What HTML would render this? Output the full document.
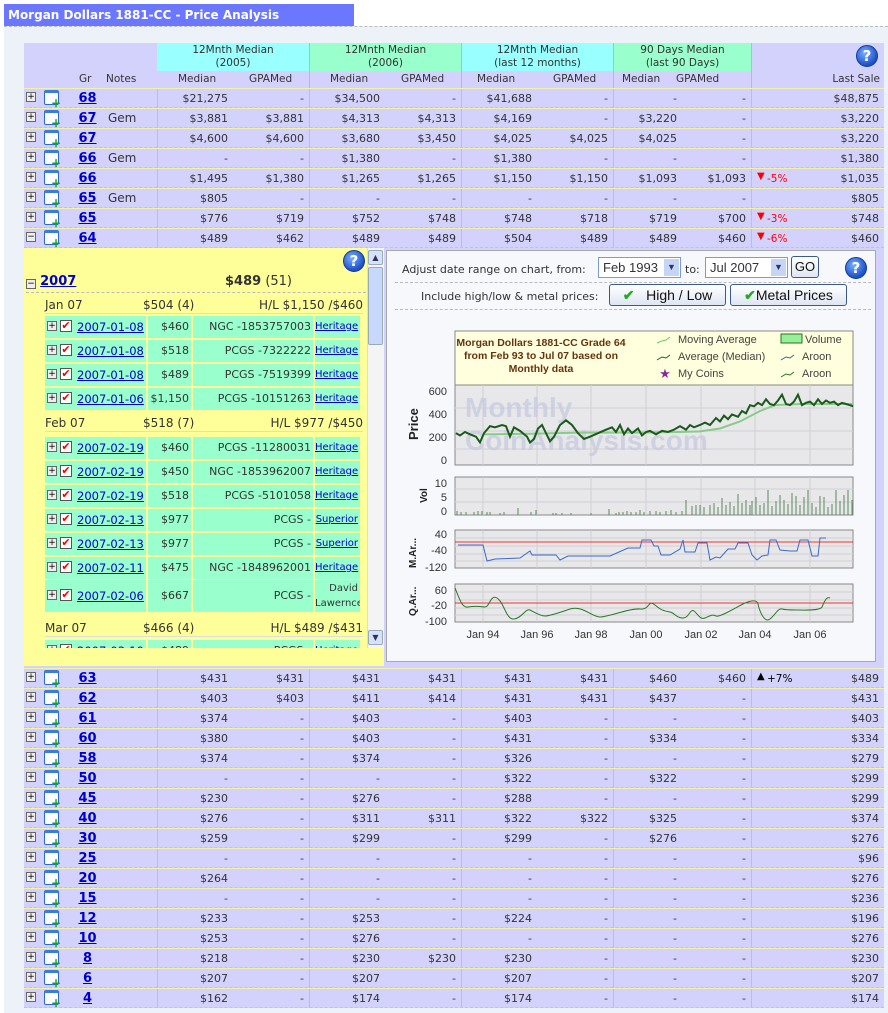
<!DOCTYPE html>
<html><head><meta charset="utf-8"><style>
*{margin:0;padding:0;box-sizing:border-box}
body{width:888px;height:1013px;background:#fff;font-family:"DejaVu Sans","Liberation Sans",sans-serif;font-size:11px;color:#333;position:relative;overflow:hidden}
.title{position:absolute;left:4px;top:4px;width:350px;height:22px;background:#6b77ff;color:#fff;font-weight:bold;font-size:12px;line-height:22px;padding-left:4px}
.bg{position:absolute;left:4px;top:26px;width:884px;height:987px;background:#edf2f9;border-top:1px dashed #bbb}
.hd{position:absolute;left:24px;top:43px;width:860px;height:45px;background:#d2d2fc}
.hc{position:absolute;top:0;height:28px;text-align:center;line-height:13px;padding-top:1px;font-size:10.5px}
.hs{position:absolute;top:30px;font-size:10.5px}
.r{position:absolute;left:24px;width:860px;height:20px;display:grid;grid-template-columns:16px 30px 35px 52px 76px 76px 76px 76px 76px 76px 69px 69px 133px;background:#d2d2fc;line-height:19px;border-top:1px solid #f4f0b0;border-bottom:1px dashed #c4c4c4;font-size:11px}
.r>span{text-align:right;padding-right:5px;white-space:nowrap}
.r>span:nth-child(5),.r>span:nth-child(7),.r>span:nth-child(9),.r>span:nth-child(11),.r>span:nth-child(13){border-left:1px solid #c0c0c0}
.r>span:nth-child(13){position:relative}
.pl{display:block;width:10px;height:10px;border:1px solid #666;background:#eee;margin:3px 0 0 2px;font-size:9px;line-height:8px;text-align:center;font-style:normal;color:#000}
.ic{display:block;width:15px;height:15px;margin:1px 0 0 4px;border:1px solid #2a6ad8;border-top:3px solid #3a7ae8;border-radius:2px;background:#fff;position:relative}
.ic:after{content:"+";position:absolute;right:-3px;bottom:-5px;color:#1a1;font-weight:bold;font-size:12px;line-height:12px}
.g{text-align:center!important;padding:0!important;color:#00c;font-weight:bold;text-decoration:underline;font-size:13px}
.n{text-align:left!important;font-size:12px;padding-left:3px}
.dn{position:absolute;left:5px;top:0;color:#f00;font-size:10px;line-height:16px;font-weight:normal}
.pc{position:absolute;left:15px;top:1px;color:#f00;font-size:10.5px;font-weight:normal}
.help{position:absolute;width:22px;height:22px;border-radius:50%;background:radial-gradient(circle at 40% 35%,#7ab0ff,#1d4fc8 70%);border:1px solid #113a9a;color:#fff;font-weight:bold;font-size:15px;line-height:20px;text-align:center}
.yel{position:absolute;left:24px;top:248px;width:360px;height:418px;background:#ffff99;overflow:hidden}
.mh{position:absolute;left:21px;width:318px;height:18px;border-bottom:1px solid #ddd;font-size:12px;line-height:18px}
.sr{position:absolute;left:21px;width:317px;height:22px;display:grid;grid-template-columns:14px 16px 73px 45px 122px 47px;background:#99ffcc;font-size:11px;line-height:22px}
.sr>*{border-right:2px solid #ffff99;white-space:nowrap;overflow:hidden}
.sr .d{color:#00c;text-decoration:underline;padding-left:2px;font-size:11.5px}
.sr .p{text-align:right;padding-right:2px}
.sr .s{text-align:right;padding-right:2px}
.sr .h{color:#00c;text-decoration:underline;font-size:10px;text-align:right;padding-right:2px}
.sp{display:block;width:10px;height:10px;border:1px solid #666;background:#eee;margin:5px 0 0 2px;font-size:9px;line-height:8px;text-align:center;color:#000}
.ck{display:block;width:12px;height:12px;border:1px solid #555;background:#fff;margin:4px 0 0 1px;color:#e00;font-size:11px;line-height:10px;text-align:center;font-weight:bold}
.cp{position:absolute;left:386px;top:250px;width:490px;height:412px;background:#f7f8fb;border:1px solid #aaa}
.sel{position:absolute;height:21px;border:1px solid #7a9cd3;background:#fff;line-height:19px;padding-left:4px;font-family:"Liberation Sans",sans-serif;font-size:13px}
.sel i{position:absolute;right:1px;top:1px;width:15px;height:17px;background:#c5d5f5;font-style:normal;font-size:9px;text-align:center;line-height:17px;color:#336}
.btn{position:absolute;height:22px;border:1px solid #3a5a8a;border-radius:3px;background:linear-gradient(#fff,#dfe6f2);font-family:"Liberation Sans",sans-serif;font-size:14px;line-height:20px;text-align:center;color:#111}
.btn b{color:#2a2;font-size:14px}
</style></head><body>
<div class="title">Morgan Dollars 1881-CC - Price Analysis</div>
<div class="bg"></div>
<div class="hd">
<div class="hc" style="left:133px;width:152px;background:#99ffff">12Mnth Median<br>(2005)</div>
<div class="hc" style="left:285px;width:152px;background:#99ffcc;border-left:1px solid #bbb">12Mnth Median<br>(2006)</div>
<div class="hc" style="left:437px;width:152px;background:#99ffff;border-left:1px solid #bbb">12Mnth Median<br>(last 12 months)</div>
<div class="hc" style="left:589px;width:138px;background:#99ffcc;border-left:1px solid #bbb">90 Days Median<br>(last 90 Days)</div>
<div style="position:absolute;left:727px;top:0;width:1px;height:45px;background:#bbb"></div>
<div style="position:absolute;left:285px;top:28px;width:1px;height:17px;background:#bbb"></div>
<div style="position:absolute;left:437px;top:28px;width:1px;height:17px;background:#bbb"></div>
<div style="position:absolute;left:589px;top:28px;width:1px;height:17px;background:#bbb"></div>
<span class="hs" style="left:55px">Gr</span><span class="hs" style="left:82px">Notes</span>
<span class="hs" style="left:154px">Median</span><span class="hs" style="left:225px">GPAMed</span>
<span class="hs" style="left:306px">Median</span><span class="hs" style="left:377px">GPAMed</span>
<span class="hs" style="left:453px">Median</span><span class="hs" style="left:529px">GPAMed</span>
<span class="hs" style="left:598px">Median</span><span class="hs" style="left:652px">GPAMed</span>
<span class="hs" style="right:4px">Last Sale</span>
</div>
<div class="help" style="left:856px;top:45px">?</div>

<div class="r" style="top:88px"><i class="pl">+</i><i class="ic"></i><span class="g">68</span><span class="n"></span><span>$21,275</span><span>-</span><span>$34,500</span><span>-</span><span>$41,688</span><span>-</span><span>-</span><span>-</span><span>$48,875</span></div>
<div class="r" style="top:108px"><i class="pl">+</i><i class="ic"></i><span class="g">67</span><span class="n">Gem</span><span>$3,881</span><span>$3,881</span><span>$4,313</span><span>$4,313</span><span>$4,169</span><span>-</span><span>$3,220</span><span>-</span><span>$3,220</span></div>
<div class="r" style="top:128px"><i class="pl">+</i><i class="ic"></i><span class="g">67</span><span class="n"></span><span>$4,600</span><span>$4,600</span><span>$3,680</span><span>$3,450</span><span>$4,025</span><span>$4,025</span><span>$4,025</span><span>-</span><span>$3,220</span></div>
<div class="r" style="top:148px"><i class="pl">+</i><i class="ic"></i><span class="g">66</span><span class="n">Gem</span><span>-</span><span>-</span><span>$1,380</span><span>-</span><span>$1,380</span><span>-</span><span>-</span><span>-</span><span>$1,380</span></div>
<div class="r" style="top:168px"><i class="pl">+</i><i class="ic"></i><span class="g">66</span><span class="n"></span><span>$1,495</span><span>$1,380</span><span>$1,265</span><span>$1,265</span><span>$1,150</span><span>$1,150</span><span>$1,093</span><span>$1,093</span><span><b class="dn">▼</b><b class="pc">-5%</b>$1,035</span></div>
<div class="r" style="top:188px"><i class="pl">+</i><i class="ic"></i><span class="g">65</span><span class="n">Gem</span><span>$805</span><span>-</span><span>-</span><span>-</span><span>-</span><span>-</span><span>-</span><span>-</span><span>$805</span></div>
<div class="r" style="top:208px"><i class="pl">+</i><i class="ic"></i><span class="g">65</span><span class="n"></span><span>$776</span><span>$719</span><span>$752</span><span>$748</span><span>$748</span><span>$718</span><span>$719</span><span>$700</span><span><b class="dn">▼</b><b class="pc">-3%</b>$748</span></div>
<div class="r" style="top:228px"><i class="pl">−</i><i class="ic"></i><span class="g">64</span><span class="n"></span><span>$489</span><span>$462</span><span>$489</span><span>$489</span><span>$504</span><span>$489</span><span>$489</span><span>$460</span><span><b class="dn">▼</b><b class="pc">-6%</b>$460</span></div>

<div style="position:absolute;left:24px;top:248px;width:860px;height:420px;background:#d2d2fc"></div>
<div class="yel">
<div class="help" style="left:319px;top:2px">?</div>
<div style="position:absolute;left:2px;top:26px;width:340px;height:19px;border-bottom:1px dashed #bbb;font-size:13px">
<i class="pl" style="display:inline-block;margin:0;vertical-align:-1px">−</i> <b style="color:#00c;text-decoration:underline">2007</b>
<span style="position:absolute;left:199px;top:0"><b>$489</b> (51)</span></div>
<div class="mh" style="top:48px"><span style="position:absolute;left:0">Jan 07</span><span style="position:absolute;left:98px">$504 (4)</span><span style="position:absolute;right:0">H/L $1,150 /$460</span></div>
<div class="sr" style="top:68px"><i class="sp">+</i><i class="ck">✔</i><span class="d">2007-01-08</span><span class="p">$460</span><span class="s">NGC -1853757003</span><span class="h">Heritage</span></div>
<div class="sr" style="top:92px"><i class="sp">+</i><i class="ck">✔</i><span class="d">2007-01-08</span><span class="p">$518</span><span class="s">PCGS -7322222</span><span class="h">Heritage</span></div>
<div class="sr" style="top:116px"><i class="sp">+</i><i class="ck">✔</i><span class="d">2007-01-08</span><span class="p">$489</span><span class="s">PCGS -7519399</span><span class="h">Heritage</span></div>
<div class="sr" style="top:140px"><i class="sp">+</i><i class="ck">✔</i><span class="d">2007-01-06</span><span class="p">$1,150</span><span class="s">PCGS -10151263</span><span class="h">Heritage</span></div>
<div class="mh" style="top:166px"><span style="position:absolute;left:0">Feb 07</span><span style="position:absolute;left:98px">$518 (7)</span><span style="position:absolute;right:0">H/L $977 /$450</span></div>
<div class="sr" style="top:189px"><i class="sp">+</i><i class="ck">✔</i><span class="d">2007-02-19</span><span class="p">$460</span><span class="s">PCGS -11280031</span><span class="h">Heritage</span></div>
<div class="sr" style="top:213px"><i class="sp">+</i><i class="ck">✔</i><span class="d">2007-02-19</span><span class="p">$450</span><span class="s">NGC -1853962007</span><span class="h">Heritage</span></div>
<div class="sr" style="top:237px"><i class="sp">+</i><i class="ck">✔</i><span class="d">2007-02-19</span><span class="p">$518</span><span class="s">PCGS -5101058</span><span class="h">Heritage</span></div>
<div class="sr" style="top:261px"><i class="sp">+</i><i class="ck">✔</i><span class="d">2007-02-13</span><span class="p">$977</span><span class="s">PCGS -</span><span class="h">Superior</span></div>
<div class="sr" style="top:285px"><i class="sp">+</i><i class="ck">✔</i><span class="d">2007-02-13</span><span class="p">$977</span><span class="s">PCGS -</span><span class="h">Superior</span></div>
<div class="sr" style="top:309px"><i class="sp">+</i><i class="ck">✔</i><span class="d">2007-02-11</span><span class="p">$475</span><span class="s">NGC -1848962001</span><span class="h">Heritage</span></div>
<div class="sr" style="top:332px;height:32px;line-height:32px"><i class="sp" style="margin-top:10px">+</i><i class="ck" style="margin-top:9px">✔</i><span class="d">2007-02-06</span><span class="p">$667</span><span class="s">PCGS -</span><span style="text-align:right;padding-right:2px;line-height:15px;font-size:10px;padding-top:1px">David<br>Lawernce</span></div>
<div class="mh" style="top:371px"><span style="position:absolute;left:0">Mar 07</span><span style="position:absolute;left:98px">$466 (4)</span><span style="position:absolute;right:0">H/L $489 /$431</span></div>
<div class="sr" style="top:392px;height:8px;overflow:hidden"><i class="sp">+</i><i class="ck">✔</i><span class="d">2007-03-10</span><span class="p">$489</span><span class="s">PCGS -</span><span class="h">Heritage</span></div>
<div style="position:absolute;left:343px;top:0;width:17px;height:400px;background:#f4f4f4;border-left:1px solid #ddd"></div>
<div style="position:absolute;left:344px;top:2px;width:15px;height:15px;background:#d5e2fb;border:1px solid #9ab;border-radius:2px;font-size:8px;text-align:center;line-height:13px;color:#335">▲</div>
<div style="position:absolute;left:344px;top:19px;width:15px;height:78px;background:#c8d8fa;border:1px solid #9ab;border-radius:2px"></div>
<div style="position:absolute;left:344px;top:382px;width:15px;height:15px;background:#d5e2fb;border:1px solid #9ab;border-radius:2px;font-size:8px;text-align:center;line-height:13px;color:#335">▼</div>
</div>

<div class="cp">
<span style="position:absolute;left:15px;top:12px;font-size:11px">Adjust date range on chart, from:</span>
<div class="sel" style="left:211px;top:6px;width:83px">Feb 1993<i>▼</i></div>
<span style="position:absolute;left:298px;top:12px;font-size:11px">to:</span>
<div class="sel" style="left:318px;top:6px;width:83px">Jul 2007<i>▼</i></div>
<div class="btn" style="left:404px;top:5px;width:28px;font-size:13px">GO</div>
<div class="help" style="left:458px;top:6px">?</div>
<div style="position:absolute;left:8px;top:31px;width:476px;border-top:1px dashed #bbb"></div>
<span style="position:absolute;left:34px;top:39px;font-size:11px">Include high/low &amp; metal prices:</span>
<div class="btn" style="left:222px;top:33px;width:117px"><b>✔</b>&nbsp;&nbsp;&nbsp;High / Low</div>
<div class="btn" style="left:343px;top:33px;width:117px"><b>✔</b>Metal Prices</div>
<div style="position:absolute;left:8px;top:58px;width:476px;border-top:1px dashed #bbb"></div>
</div>

<svg style="position:absolute;left:0;top:0" width="888" height="1013" font-family="Liberation Sans,sans-serif">
<rect x="455" y="331" width="398" height="54" fill="#ffffdd" stroke="#888"/>
<text x="541" y="346" font-size="10.5" font-weight="bold" fill="#663311" text-anchor="middle">Morgan Dollars 1881-CC Grade 64</text>
<text x="541" y="359" font-size="10.5" font-weight="bold" fill="#663311" text-anchor="middle">from Feb 93 to Jul 07 based on</text>
<text x="541" y="372" font-size="10.5" font-weight="bold" fill="#663311" text-anchor="middle">Monthly data</text>
<path d="M657 343l5-2 4-1 4-3" stroke="#6c6" fill="none"/><text x="678" y="343" font-size="11" fill="#444">Moving Average</text>
<path d="M657 360l5-3 4 1 4-3" stroke="#163" fill="none"/><text x="678" y="360" font-size="11" fill="#444">Average (Median)</text>
<text x="665" y="378" font-size="13" fill="#8a2a9a" text-anchor="middle">★</text><text x="678" y="377" font-size="11" fill="#444">My Coins</text>
<rect x="781" y="334" width="21" height="9" fill="#9e9" stroke="#272"/><text x="805" y="343" font-size="11" fill="#444">Volume</text>
<path d="M781 360l5-3 4 1 4-3" stroke="#369" fill="none"/><text x="802" y="360" font-size="11" fill="#444">Aroon</text>
<path d="M781 377l5-3 4 1 4-3" stroke="#272" fill="none"/><text x="802" y="377" font-size="11" fill="#444">Aroon</text>
<rect x="455" y="385" width="398" height="80" fill="#e8e8ea" stroke="#888"/>
<g stroke="#d0d0d6"><path d="M483 385v80M537 385v80M591 385v80M646 385v80M701 385v80M755 385v80M810 385v80M455 408h398M455 431h398M455 449h398"/></g>
<text x="465" y="417" font-size="28" font-weight="bold" fill="#c8cce0" opacity=".8">Monthly</text>
<text x="465" y="450" font-size="28" font-weight="bold" fill="#c8cce0" opacity=".8">CoinAnalysis.com</text>
<text x="447" y="395" font-size="11" fill="#333" text-anchor="end">600</text>
<text x="447" y="418" font-size="11" fill="#333" text-anchor="end">400</text>
<text x="447" y="441" font-size="11" fill="#333" text-anchor="end">200</text>
<text x="447" y="464" font-size="11" fill="#333" text-anchor="end">0</text>
<text transform="translate(418,440) rotate(-90)" font-size="13" font-weight="bold" fill="#222">Price</text>
<g transform="translate(0,460) scale(1,-0.1167)">
<polyline vector-effect="non-scaling-stroke" fill="none" stroke="#8c8" stroke-width="2" points="484,220 530,225 580,235 640,235 680,240 700,245 720,270 740,330 760,420 775,470 800,480 853,480"/>
<polyline vector-effect="non-scaling-stroke" fill="none" stroke="#1a5a1a" stroke-width="2" points="456,230 460,210 465,240 470,220 476,200 480,150 484,230 490,290 495,280 502,300 506,290 510,200 514,280 520,250 527,200 530,150 534,180 538,270 542,300 546,230 550,160 554,200 560,300 566,340 572,300 578,230 584,180 590,200 598,230 606,260 612,280 616,240 620,300 624,220 628,270 632,230 638,270 642,210 646,240 650,250 656,220 662,250 668,240 674,260 680,290 686,260 690,300 694,280 700,300 705,320 710,300 716,360 720,330 724,380 728,350 732,390 738,370 742,420 746,400 750,470 754,460 758,490 762,470 766,520 770,480 774,470 778,510 782,560 786,480 790,470 794,500 798,560 802,470 806,490 810,500 814,470 818,520 822,480 826,510 830,490 834,500 838,470 842,490 846,480 850,470 853,460"/>
</g>
<rect x="455" y="477" width="398" height="38" fill="#e8e8ea" stroke="#888"/>
<g stroke="#d0d0d6"><path d="M483 477v38M537 477v38M591 477v38M646 477v38M701 477v38M755 477v38M810 477v38M455 489h398M455 502h398"/></g>
<path stroke="#5a8a5a" d="M457 515v-4M461 515v-3M466 515v-3M474 515v-3M478 515v-4M482 515v-4M487 515v-3M490 515v-3M500 515v-2M504 515v-3M518 515v-7M531 515v-3M536 515v-5M553 515v-2M556 515v-2M562 515v-2M571 515v-2M591 515v-2M609 515v-6M616 515v-2M619 515v-3M623 515v-3M627 515v-4M631 515v-3M636 515v-3M640 515v-5M644 515v-3M650 515v-4M656 515v-4M660 515v-3M666 515v-4M671 515v-5M676 515v-3M682 515v-4M686 515v-15M692 515v-9M696 515v-10M700 515v-10M704 515v-8M710 515v-10M714 515v-12M718 515v-8M722 515v-17M726 515v-10M730 515v-13M734 515v-9M738 515v-21M742 515v-12M746 515v-15M750 515v-10M752 515v-14M756 515v-18M760 515v-10M764 515v-12M768 515v-25M772 515v-9M776 515v-14M780 515v-20M784 515v-15M788 515v-11M792 515v-22M796 515v-19M800 515v-10M804 515v-18M808 515v-25M812 515v-12M816 515v-8M820 515v-19M824 515v-18M828 515v-8M832 515v-11M836 515v-25M840 515v-14M844 515v-20M848 515v-25M852 515v-15"/>
<text x="447" y="487" font-size="11" fill="#333" text-anchor="end">10</text>
<text x="447" y="501" font-size="11" fill="#333" text-anchor="end">5</text>
<text x="447" y="515" font-size="11" fill="#333" text-anchor="end">0</text>
<text transform="translate(427,503) rotate(-90)" font-size="10" font-weight="bold" fill="#222">Vol</text>
<rect x="455" y="530" width="398" height="38" fill="#e8e8ea" stroke="#888"/>
<g stroke="#d0d0d6"><path d="M483 530v38M537 530v38M591 530v38M646 530v38M701 530v38M755 530v38M810 530v38M455 538h398M455 546h398M455 554h398M455 561h398"/></g>
<path d="M455 542h398" stroke="#e33"/>
<polyline fill="none" stroke="#3a6ac8" points="458,545 483,545 487,561 495,559 520,558 530,551 532,555 556,555 560,560 568,556 610,556 628,548 640,548 642,540 651,540 654,546 658,546 661,555 670,555 680,549 683,540 685,552 695,552 698,543 707,543 710,560 716,557 720,558 728,549 735,549 738,543 748,543 752,555 757,560 762,556 768,555 770,540 776,540 780,550 790,551 797,551 800,540 808,540 812,556 818,556 820,538 826,538"/>
<text x="447" y="538" font-size="11" fill="#333" text-anchor="end">40</text>
<text x="447" y="554" font-size="11" fill="#333" text-anchor="end">-40</text>
<text x="447" y="571" font-size="11" fill="#333" text-anchor="end">-120</text>
<text transform="translate(416,568) rotate(-90)" font-size="10" font-weight="bold" fill="#222">M.Ar...</text>
<rect x="455" y="584" width="398" height="38" fill="#e8e8ea" stroke="#888"/>
<g stroke="#d0d0d6"><path d="M483 584v38M537 584v38M591 584v38M646 584v38M701 584v38M755 584v38M810 584v38M455 592h398M455 600h398M455 608h398M455 615h398"/></g>
<path d="M455 603h398" stroke="#e33"/>
<path fill="none" stroke="#2a7a2a" d="M455 588C460 600 462 608 468 607S478 606 484 607S490 594 497 598S506 620 514 619S526 608 530 610S540 616 545 616S558 613 570 609S592 617 600 617S630 608 640 609S648 599 655 605S665 611 670 612S675 617 682 618S690 608 694 611S700 620 705 618S712 614 716 616S740 605 745 603S757 599 758 604S764 624 770 619S778 608 782 609S790 610 796 610S820 611 822 607S826 596 830 598"/>
<text x="447" y="594" font-size="11" fill="#333" text-anchor="end">60</text>
<text x="447" y="609" font-size="11" fill="#333" text-anchor="end">-20</text>
<text x="447" y="625" font-size="11" fill="#333" text-anchor="end">-100</text>
<text transform="translate(416,616) rotate(-90)" font-size="10" font-weight="bold" fill="#222">Q.Ar...</text>
<g font-size="11" fill="#333" text-anchor="middle"><text x="483" y="638">Jan 94</text><text x="537" y="638">Jan 96</text><text x="591" y="638">Jan 98</text><text x="646" y="638">Jan 00</text><text x="701" y="638">Jan 02</text><text x="755" y="638">Jan 04</text><text x="810" y="638">Jan 06</text></g>
</svg>

<div class="r" style="top:668px"><i class="pl">+</i><i class="ic"></i><span class="g">63</span><span class="n"></span><span>$431</span><span>$431</span><span>$431</span><span>$431</span><span>$431</span><span>$431</span><span>$460</span><span>$460</span><span><b class="dn" style="color:#000">▲</b><b class="pc" style="color:#000">+7%</b>$489</span></div>
<div class="r" style="top:688px"><i class="pl">+</i><i class="ic"></i><span class="g">62</span><span class="n"></span><span>$403</span><span>$403</span><span>$411</span><span>$414</span><span>$431</span><span>$431</span><span>$437</span><span>-</span><span>$431</span></div>
<div class="r" style="top:708px"><i class="pl">+</i><i class="ic"></i><span class="g">61</span><span class="n"></span><span>$374</span><span>-</span><span>$403</span><span>-</span><span>$403</span><span>-</span><span>-</span><span>-</span><span>$403</span></div>
<div class="r" style="top:728px"><i class="pl">+</i><i class="ic"></i><span class="g">60</span><span class="n"></span><span>$380</span><span>-</span><span>$403</span><span>-</span><span>$431</span><span>-</span><span>$334</span><span>-</span><span>$334</span></div>
<div class="r" style="top:748px"><i class="pl">+</i><i class="ic"></i><span class="g">58</span><span class="n"></span><span>$374</span><span>-</span><span>$374</span><span>-</span><span>$326</span><span>-</span><span>-</span><span>-</span><span>$279</span></div>
<div class="r" style="top:768px"><i class="pl">+</i><i class="ic"></i><span class="g">50</span><span class="n"></span><span>-</span><span>-</span><span>-</span><span>-</span><span>$322</span><span>-</span><span>$322</span><span>-</span><span>$299</span></div>
<div class="r" style="top:788px"><i class="pl">+</i><i class="ic"></i><span class="g">45</span><span class="n"></span><span>$230</span><span>-</span><span>$276</span><span>-</span><span>$288</span><span>-</span><span>-</span><span>-</span><span>$299</span></div>
<div class="r" style="top:808px"><i class="pl">+</i><i class="ic"></i><span class="g">40</span><span class="n"></span><span>$276</span><span>-</span><span>$311</span><span>$311</span><span>$322</span><span>$322</span><span>$325</span><span>-</span><span>$374</span></div>
<div class="r" style="top:828px"><i class="pl">+</i><i class="ic"></i><span class="g">30</span><span class="n"></span><span>$259</span><span>-</span><span>$299</span><span>-</span><span>$299</span><span>-</span><span>$276</span><span>-</span><span>$276</span></div>
<div class="r" style="top:848px"><i class="pl">+</i><i class="ic"></i><span class="g">25</span><span class="n"></span><span>-</span><span>-</span><span>-</span><span>-</span><span>-</span><span>-</span><span>-</span><span>-</span><span>$96</span></div>
<div class="r" style="top:868px"><i class="pl">+</i><i class="ic"></i><span class="g">20</span><span class="n"></span><span>$264</span><span>-</span><span>-</span><span>-</span><span>-</span><span>-</span><span>-</span><span>-</span><span>$276</span></div>
<div class="r" style="top:888px"><i class="pl">+</i><i class="ic"></i><span class="g">15</span><span class="n"></span><span>-</span><span>-</span><span>-</span><span>-</span><span>-</span><span>-</span><span>-</span><span>-</span><span>$236</span></div>
<div class="r" style="top:908px"><i class="pl">+</i><i class="ic"></i><span class="g">12</span><span class="n"></span><span>$233</span><span>-</span><span>$253</span><span>-</span><span>$224</span><span>-</span><span>-</span><span>-</span><span>$196</span></div>
<div class="r" style="top:928px"><i class="pl">+</i><i class="ic"></i><span class="g">10</span><span class="n"></span><span>$253</span><span>-</span><span>$276</span><span>-</span><span>-</span><span>-</span><span>-</span><span>-</span><span>$276</span></div>
<div class="r" style="top:948px"><i class="pl">+</i><i class="ic"></i><span class="g">8</span><span class="n"></span><span>$218</span><span>-</span><span>$230</span><span>$230</span><span>$230</span><span>-</span><span>-</span><span>-</span><span>$230</span></div>
<div class="r" style="top:968px"><i class="pl">+</i><i class="ic"></i><span class="g">6</span><span class="n"></span><span>$207</span><span>-</span><span>$207</span><span>-</span><span>$207</span><span>-</span><span>-</span><span>-</span><span>$207</span></div>
<div class="r" style="top:988px"><i class="pl">+</i><i class="ic"></i><span class="g">4</span><span class="n"></span><span>$162</span><span>-</span><span>$174</span><span>-</span><span>$174</span><span>-</span><span>-</span><span>-</span><span>$174</span></div>
</body></html>
